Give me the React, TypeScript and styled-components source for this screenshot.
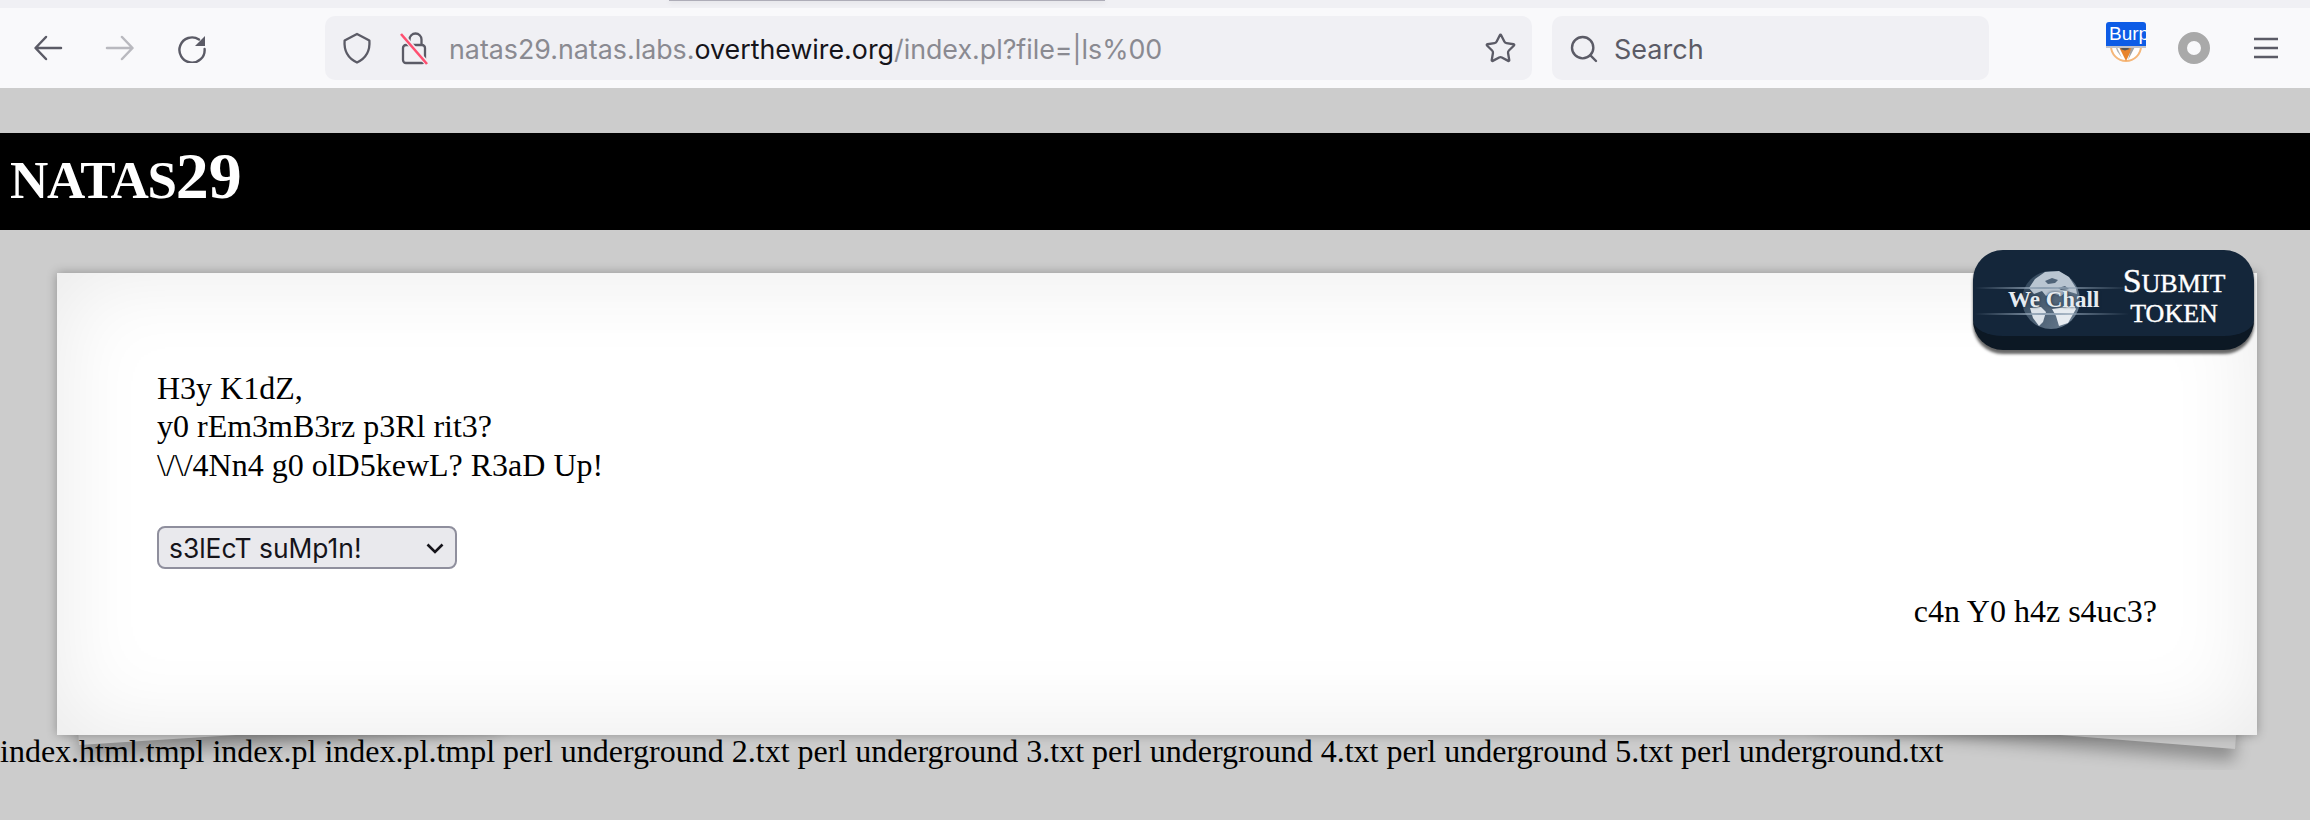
import styled, { createGlobalStyle } from "styled-components";
import { Search, Star } from "lucide-react";

const GlobalStyle = createGlobalStyle`
  html {
    background: #cccccc;
  }
  body {
    margin: 0;
    color: #000;
    font-family: "Liberation Serif", serif;
  }
`;

const listing =
  "index.html.tmpl index.pl index.pl.tmpl perl underground 2.txt perl underground 3.txt perl underground 4.txt perl underground 5.txt perl underground.txt";

const App = () => {
  return (
    <>
      <GlobalStyle />
      <TopStrip>
        <TabEdge />
      </TopStrip>
      <Toolbar>
        <NavGroup>
          <NavIcon>
            <svg width="30" height="26" viewBox="0 0 30 26" fill="none" stroke="#5b5b66" strokeWidth="2.5" strokeLinecap="round" strokeLinejoin="round">
              <path d="M28 13H3M13 2L2.5 13 13 24" />
            </svg>
          </NavIcon>
          <NavIcon $disabled>
            <svg width="30" height="26" viewBox="0 0 30 26" fill="none" stroke="#5b5b66" strokeWidth="2.5" strokeLinecap="round" strokeLinejoin="round">
              <path d="M2 13h25M17 2l10.5 11L17 24" />
            </svg>
          </NavIcon>
          <NavIcon>
            <svg width="30" height="30" viewBox="0 0 30 30" fill="none">
              <path d="M22 6.5A12.6 12.6 0 1 0 27.6 16" stroke="#5b5b66" strokeWidth="2.4" strokeLinecap="round" />
              <path d="M28 3v10H18z" fill="#5b5b66" />
            </svg>
          </NavIcon>
        </NavGroup>
        <UrlBar>
          <ShieldSlot>
            <svg width="30" height="32" viewBox="0 0 30 32" fill="none">
              <path
                d="M15 2l12.4 6.6C28.200 19 24.500 26 15 30.500 5.500 26 1.800 19 2.600 8.600z"
                stroke="#5b5b66"
                strokeWidth="2.3"
                strokeLinejoin="round"
              />
            </svg>
          </ShieldSlot>
          <LockSlot>
            <svg width="30" height="34" viewBox="0 0 30 34" fill="none">
              <path d="M9.500 14V8.500a6 6 0 0 1 12 0V14" stroke="#5b5b66" strokeWidth="2.300" />
              <rect x="3" y="14" width="22" height="18" rx="3" stroke="#5b5b66" strokeWidth="2.300" />
              <path d="M2.500 4.500l24.500 28" stroke="#f0f0f4" strokeWidth="5" />
              <path d="M1 3l26 30" stroke="#ff4f70" strokeWidth="2.600" />
            </svg>
          </LockSlot>
          <UrlText>
            natas29.natas.labs.<strong>overthewire.org</strong>/index.pl?file=|ls%00
          </UrlText>
          <StarSlot>
            <Star size={33} strokeWidth={1.7} />
          </StarSlot>
        </UrlBar>
        <SearchBar>
          <Search size={32} strokeWidth={1.8} />
          <span>Search</span>
        </SearchBar>
        <Extensions>
          <BurpSlot>
            <svg width="32" height="34" viewBox="0 0 32 34">
              <circle cx="16" cy="17" r="15" fill="#fff" stroke="#f5b77a" strokeWidth="2" />
              <path d="M4 8h24L16 32z" fill="#e8842c" />
              <path d="M24 8l4 4-10 19z" fill="#a2a2a2" />
              <path d="M4 12l3 10 5 7z" fill="#b0b0b0" />
              <path d="M10 20l5-2.500 5 2.500-5 1.500z" fill="#555" />
            </svg>
            <BurpBadge>Burp</BurpBadge>
          </BurpSlot>
          <Ring />
          <MenuSlot>
            <svg width="24" height="22" viewBox="0 0 24 22" stroke="#5b5b66" strokeWidth="2.600">
              <path d="M0 2h24M0 11h24M0 20h24" />
            </svg>
          </MenuSlot>
        </Extensions>
      </Toolbar>
      <Page>
        <Banner>
          <Title>
            NATAS<Level>29</Level>
          </Title>
        </Banner>
        <Card>
          <TokenButton>
            <LogoArea>
              <svg width="60" height="60" viewBox="0 0 60 60">
                <defs>
                  <linearGradient id="globeShade" x1="0" y1="0" x2="1" y2="0.6">
                    <stop offset="0" stopColor="#2c4156" />
                    <stop offset="1" stopColor="#66798c" />
                  </linearGradient>
                </defs>
                <circle cx="30" cy="30" r="29" fill="url(#globeShade)" />
                <path d="M14 9l10-7 14-1 10 6 7 11 1 6-10-3-6 5-9-3-6 3-4-5-8 3-5-6z" fill="#b9c5d1" />
                <path d="M24 11l7-3 6 2-3 3-7 1zM37 18l7-2 4 3-8 1z" fill="#4f6378" />
                <path d="M9 38l11-1 5 5-3 10-4 4-6-8z" fill="#dbe2e9" />
                <path d="M31 39l22-3 2 3-8 14-9 3-3-10z" fill="#e6ebf0" />
              </svg>
              <LogoStreak $top={37} />
              <LogoStreak $top={63} />
              <LogoText>We Chall</LogoText>
            </LogoArea>
            <TokenLabel>
              <span>
                <BigLetter>S</BigLetter>UBMIT
              </span>
              <span>TOKEN</span>
            </TokenLabel>
          </TokenButton>
          <Lines>
            H3y K1dZ,
            <br />
            y0 rEm3mB3rz p3Rl rit3?
            <br />
            \/\/4Nn4 g0 olD5kewL? R3aD Up!
          </Lines>
          <SelectWrap>
            <PerlSelect defaultValue="">
              <option value="">s3lEcT suMp1n!</option>
            </PerlSelect>
            <Chevron width="18" height="11" viewBox="0 0 18 11" fill="none">
              <path d="M1.500 1.500L9 9l7.500-7.500" stroke="#15141a" strokeWidth="2.600" />
            </Chevron>
          </SelectWrap>
          <SauceLine>c4n Y0 h4z s4uc3?</SauceLine>
        </Card>
        <Listing>{listing}</Listing>
      </Page>
    </>
  );
};

export default App;

const TopStrip = styled.div`
  height: 8px;
  background: #f0f0f4;
  position: relative;
`;

const TabEdge = styled.div`
  position: absolute;
  left: 669px;
  top: 0;
  width: 436px;
  height: 1px;
  background: #aeadb8;
  box-shadow: 0 1px 5px rgba(0, 0, 0, 0.18);
`;

const Toolbar = styled.div`
  height: 80px;
  background: #f9f9fb;
  display: flex;
  align-items: center;
  color: #5b5b66;
`;

const NavGroup = styled.div`
  width: 325px;
  padding-left: 33px;
  box-sizing: border-box;
  display: flex;
  gap: 42px;
`;

const NavIcon = styled.div<{ $disabled?: boolean }>`
  width: 30px;
  height: 34px;
  display: flex;
  align-items: center;
  justify-content: center;
  opacity: ${(props) => (props.$disabled ? 0.4 : 1)};
`;

const UrlBar = styled.div`
  width: 1207px;
  height: 64px;
  background: #f0f0f4;
  border-radius: 10px;
  display: flex;
  align-items: center;
`;

const ShieldSlot = styled.div`
  margin-left: 17px;
  display: flex;
`;

const LockSlot = styled.div`
  margin-left: 28px;
  display: flex;
`;

const UrlText = styled.div`
  margin-left: 19px;
  padding-top: 2px;
  flex: 1;
  font-family: Inter, "Liberation Sans", sans-serif;
  font-size: 26.8px;
  color: #8a8a91;
  white-space: nowrap;

  strong {
    font-weight: 400;
    color: #15141a;
  }
`;

const StarSlot = styled.div`
  margin-right: 15px;
  display: flex;
`;

const SearchBar = styled.div`
  width: 437px;
  height: 64px;
  margin-left: 20px;
  background: #f0f0f4;
  border-radius: 10px;
  display: flex;
  align-items: center;
  gap: 14px;
  padding: 2px 0 0 16px;
  box-sizing: border-box;
  font-family: Inter, "Liberation Sans", sans-serif;
  font-size: 27px;
`;

const Extensions = styled.div`
  flex: 1;
  display: flex;
  align-items: center;
  padding-left: 117px;
`;

const BurpSlot = styled.div`
  position: relative;
  width: 40px;
  height: 41px;
  margin-bottom: 11px;
  display: flex;
  justify-content: center;
  align-items: flex-end;
`;

const BurpBadge = styled.div`
  position: absolute;
  left: 0;
  top: 0;
  width: 40px;
  height: 24px;
  overflow: hidden;
  background: #0d5ce6;
  border-radius: 3px 3px 0 0;
  box-shadow: 0 2px 0 #c2c2c8;
  color: #fff;
  font-family: "Liberation Sans", sans-serif;
  font-size: 19px;
  line-height: 24px;
  padding-left: 3px;
  box-sizing: border-box;
  white-space: nowrap;
`;

const Ring = styled.div`
  width: 32px;
  height: 32px;
  margin-left: 32px;
  border: 9.5px solid #a9a9a9;
  border-radius: 50%;
  box-sizing: border-box;
`;

const MenuSlot = styled.div`
  display: flex;
  margin-left: 44px;
`;

const Page = styled.div`
  padding-top: 45px;
`;

const Banner = styled.div`
  height: 97px;
  background: #000;
`;

const Title = styled.h1`
  margin: 0;
  padding-left: 10px;
  color: #fff;
  font-size: 53px;
  font-weight: 700;
  letter-spacing: -1.2px;
  line-height: 86px;
`;

const Level = styled.span`
  font-size: 66px;
  letter-spacing: 0;
`;

const Card = styled.div`
  position: relative;
  box-sizing: border-box;
  margin: 43px 53px 0 57px;
  height: 462px;
  padding: 96px 100px 0;
  background: #fff;
  box-shadow:
    0 0 10px rgba(0, 0, 0, 0.3),
    inset 0 0 90px rgba(0, 0, 0, 0.09);

  &::before,
  &::after {
    content: "";
    position: absolute;
    z-index: -1;
    bottom: -14px;
    width: 420px;
    height: 60px;
    background: #c6c6c6;
    box-shadow: 0 12px 16px rgba(0, 0, 0, 0.3);
  }

  &::before {
    left: 22px;
    bottom: -10px;
    transform: rotate(-3.6deg);
    transform-origin: left bottom;
  }

  &::after {
    right: 22px;
    transform: rotate(4.6deg);
    transform-origin: right bottom;
  }
`;

const TokenButton = styled.div`
  position: absolute;
  left: 1916px;
  top: -23px;
  width: 281px;
  height: 100px;
  box-sizing: border-box;
  border-radius: 30px;
  background: #14263a;
  border-bottom: 14px solid #0c1824;
  box-shadow: 0 4px 3px rgba(0, 0, 0, 0.6);
  display: flex;
  align-items: center;
`;

const LogoArea = styled.div`
  position: relative;
  width: 156px;
  height: 86px;
  padding-top: 14px;
  box-sizing: border-box;
  display: flex;
  align-items: center;
  justify-content: center;
`;

const LogoStreak = styled.div<{ $top: number }>`
  position: absolute;
  left: 2px;
  right: 0;
  top: ${(props) => props.$top}px;
  height: 2px;
  background: linear-gradient(90deg, transparent, #8ea0b2 45%, transparent);
`;

const LogoText = styled.div`
  position: absolute;
  left: 35px;
  top: 37px;
  color: #e6ebf0;
  font-size: 23px;
  font-weight: 700;
  white-space: nowrap;
  text-shadow: 0 0 3px #14263a;
`;

const TokenLabel = styled.div`
  width: 90px;
  display: flex;
  flex-direction: column;
  align-items: center;
  padding-top: 8px;
  color: #fff;
  font-size: 26px;
  line-height: 30px;
  white-space: nowrap;
  -webkit-text-stroke: 0.4px #fff;
`;

const BigLetter = styled.span`
  font-size: 34px;
`;

const Lines = styled.p`
  margin: 0;
  font-size: 32px;
  line-height: 38.4px;
`;

const SelectWrap = styled.div`
  position: relative;
  width: 300px;
  height: 43px;
  margin-top: 42px;
`;

const PerlSelect = styled.select`
  appearance: none;
  width: 100%;
  height: 100%;
  box-sizing: border-box;
  padding: 0 0 0 10px;
  background: #e9e9ed;
  border: 2px solid #8f8f9d;
  border-radius: 8px;
  color: #15141a;
  font-family: Inter, "Liberation Sans", sans-serif;
  font-size: 26.4px;
`;

const Chevron = styled.svg`
  position: absolute;
  right: 13px;
  top: 17px;
  pointer-events: none;
`;

const SauceLine = styled.div`
  margin-top: 23px;
  text-align: right;
  font-size: 32px;
  line-height: 38px;
`;

const Listing = styled.div`
  margin-top: -3px;
  font-size: 32px;
  line-height: 38px;
  white-space: nowrap;
`;
